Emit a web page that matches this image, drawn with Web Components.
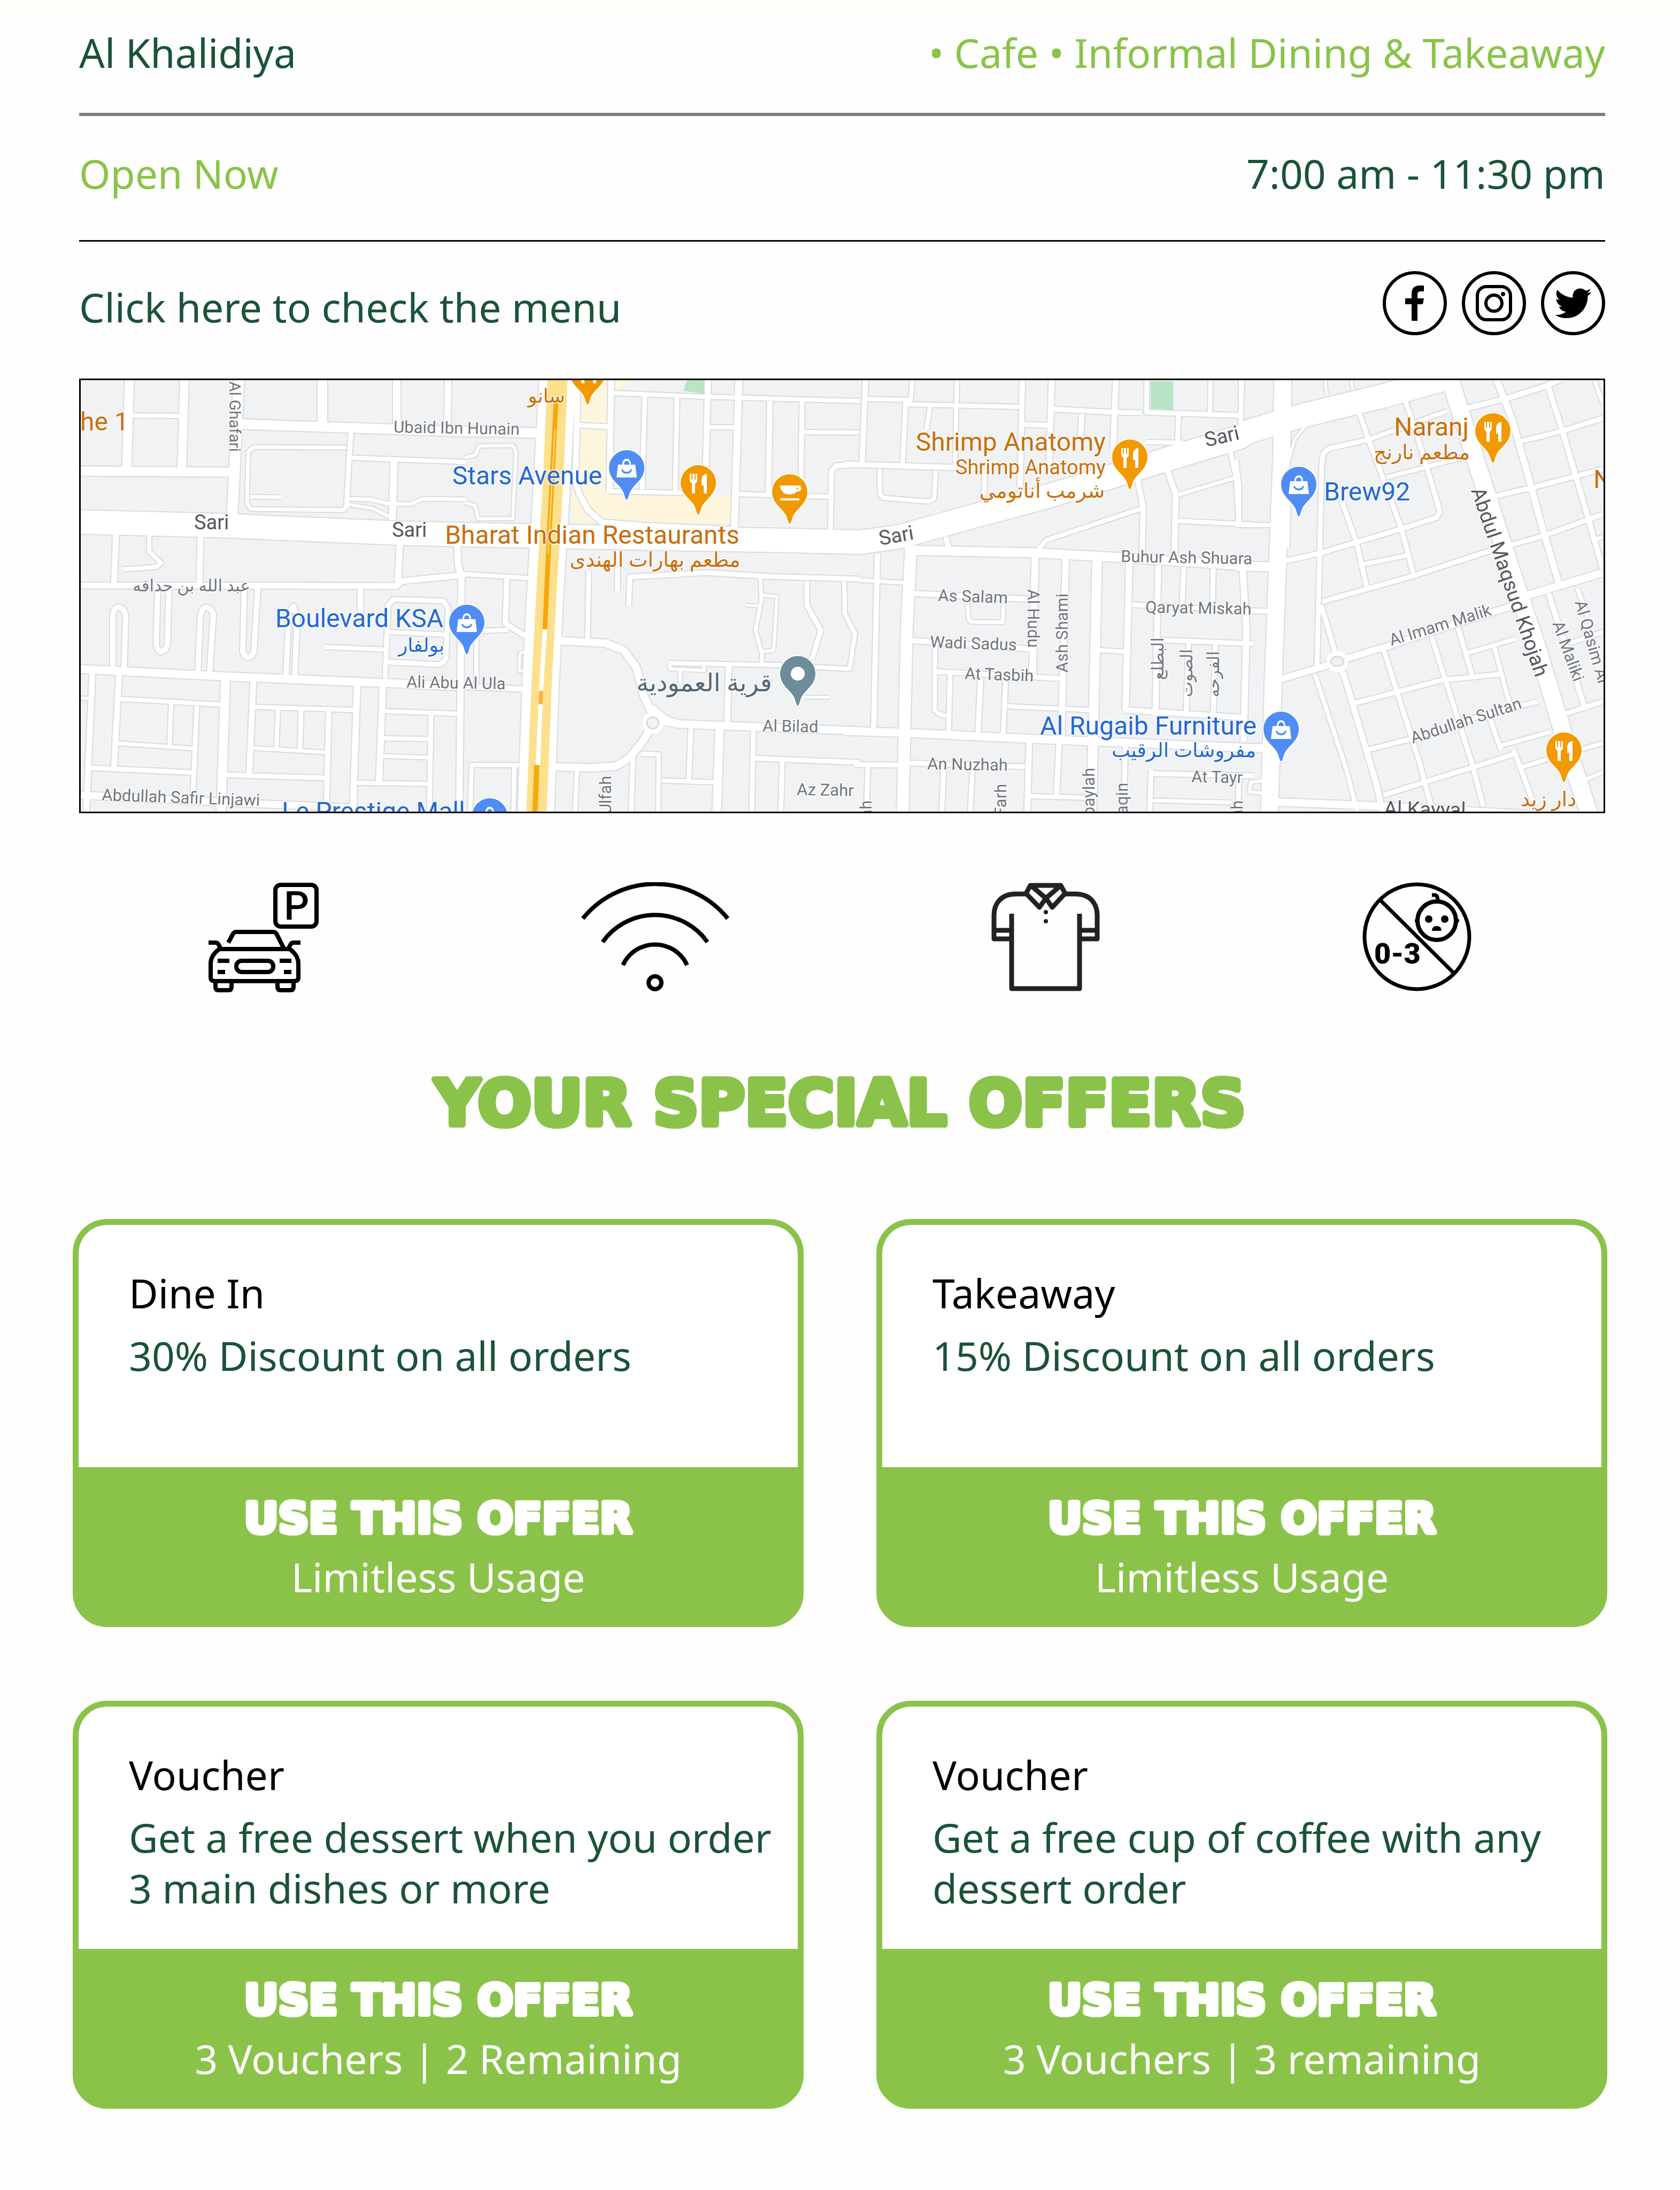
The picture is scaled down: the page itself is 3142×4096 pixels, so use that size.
<!DOCTYPE html>
<html lang="en">
<head>
<meta charset="utf-8">
<meta name="viewport" content="width=device-width, initial-scale=1">
<title>Special offers</title>
<style>
  body {
    margin: 0;
    font-family: "Noto Sans", "Open Sans", sans-serif;
    font-size: 75px;
    line-height: 96px;
    color: #000;
    background: linear-gradient(#fffef8, #fefefe 40px);
    --green: #8bc34a;
    --forest: #1b5338;
  }
</style>
</head>
<body>
<venue-page></venue-page>

<script>
const define = (name, html, setup) => {
  const template = document.createElement('template');
  template.innerHTML = html;
  customElements.define(name, class extends HTMLElement {
    constructor() {
      super();
      this.attachShadow({ mode: 'open' }).append(template.content.cloneNode(true));
      if (setup) setup(this.shadowRoot, this);
    }
  });
};

/* Bold lettering with soft, rounded corners: a ring of shadows round each glyph. */
const ring = () => {
  const out = [];
  for (let i = 0; i < 16; i++) {
    const a = i * Math.PI / 8;
    out.push(`calc(var(--r) * ${Math.cos(a).toFixed(2)}) calc(var(--r) * ${Math.sin(a).toFixed(2)}) 0 currentColor`);
  }
  return out.join(',');
};

define('info-row', `
  <style>
    :host { display: flex; justify-content: space-between; border-bottom: 3px solid #000; padding: 59px 0 77px; color: var(--forest); }
    :host([first]) { border-bottom: 6px solid #808080; padding: 50px 0 65px; }
    ::slotted(.live) { color: var(--green); }
  </style>
  <slot></slot>`);

define('social-link', `
  <style>
    :host { display: block; width: 120px; height: 120px; }
    svg { display: block; width: 100%; height: 100%; }
    g { display: none; }
    :host([kind=facebook]) .facebook, :host([kind=instagram]) .instagram, :host([kind=twitter]) .twitter { display: inline; }
  </style>
  <a href="#"><svg viewBox="0 0 120 120" aria-hidden="true">
    <circle cx="60" cy="60" r="57" fill="none" stroke="#000" stroke-width="6"/>
    <g class="facebook"><path d="M54 93V62H42V51h12V42c0-10 6-15 15-15h8v11h-6c-4 0-6 2-6 6v7h12l-2 11h-10v31z"/></g>
    <g class="instagram" fill="none" stroke="#000" stroke-width="6">
      <rect x="29" y="29" width="62" height="62" rx="17"/><circle cx="60" cy="60" r="15"/><circle cx="77" cy="43" r="4" fill="#000" stroke="none"/></g>
    <g class="twitter"><path transform="translate(26 26) scale(2.85)" d="M23.95 4.57a10 10 0 0 1-2.82.78 4.96 4.96 0 0 0 2.16-2.73c-.95.56-2 .96-3.13 1.19a4.92 4.92 0 0 0-8.38 4.48C7.69 8.1 4.07 6.13 1.64 3.16a4.92 4.92 0 0 0 1.52 6.57 4.9 4.9 0 0 1-2.23-.61v.06a4.92 4.92 0 0 0 3.95 4.83 5 5 0 0 1-2.21.08 4.94 4.94 0 0 0 4.6 3.42A9.87 9.87 0 0 1 0 19.54a13.99 13.99 0 0 0 7.56 2.21c9.05 0 14-7.5 14-13.98 0-.21 0-.42-.02-.63a9.94 9.94 0 0 0 2.46-2.55z"/></g>
  </svg></a>`, (root, host) => {
    root.querySelector('a').setAttribute('aria-label', host.getAttribute('kind') || 'social');
  });

define('menu-bar', `
  <style>
    :host { display: flex; justify-content: space-between; align-items: flex-start; padding: 55px 0 67px; }
    ::slotted(a) { color: var(--forest); text-decoration: none; padding: 19px 0; }
    nav { display: flex; gap: 28px; }
  </style>
  <slot></slot>
  <nav aria-label="Social">
    <social-link kind="facebook"></social-link>
    <social-link kind="instagram"></social-link>
    <social-link kind="twitter"></social-link>
  </nav>`);

/* ---- Map ---- */
/* Survey sheets, left to right; each has its own origin on the map. */
const SHEET_X = [-18, 719, 1456, 2160];
const at = (s, x, y) => [Math.round(SHEET_X[s] + x * 0.4702), Math.round(y * 0.53 - 14)];

/* One road per entry: width, then points. */
const ROADS = [
`17 30,347 640,350|17 232,20 222,345|8 228,150 440,152|16 450,20 440,345|20 668,20 640,520|18 665,182 1283,200 1568,207|18 1000,20 1000,185|14 1295,20 1295,195|12 1500,20 1498,200
9 1115,205 1105,300 1095,480|8 1110,300 1568,315|7 1095,265 725,262 705,280 700,460 715,482 1085,485 1095,470|7 710,438 835,440|13 1285,310 1278,520|7 1100,445 1190,448 1260,462 1350,465 1400,445 1568,448|6 1100,465 1200,480 1270,510
11 178,560 170,750|8 310,570 310,630 358,672 340,685 208,695|11 515,575 510,750|12 1308,600 1300,740|11 30,750 1295,752 1312,735 1568,714|12 1535,600 1540,680 1552,720 1545,1568
10 165,1050 165,850 175,832 190,826 207,834 216,855 210,1050|10 345,755 338,960 345,978 358,985 374,978 382,960 390,755|10 505,1060 515,850 525,832 540,826 556,834 565,850 550,1060|10 690,760 682,985 692,1000 705,1005 720,998 728,980 742,760|10 855,1070 865,845 885,825 900,860 888,1070
10 1150,755 1150,850|9 1248,1085 1262,820 1280,800 1480,805 1500,830 1490,1010 1470,1030 1250,1020|8 1255,915 1490,925|8 1010,968 1250,978
15 30,1045 560,1070 1230,1095 1568,1107|11 85,1050 60,1568|11 192,1050 170,1400|17 615,1070 595,1568|11 725,1085 708,1420|12 1137,1095 1120,1568|12 1240,1100 1225,1445
8 190,1150 600,1172|8 730,1180 1125,1190|8 1240,1195 1545,1203|7 180,1307 490,1327|7 720,1325 1010,1340|9 70,1395 490,1412|9 600,1418 1010,1430|8 1130,1447 1430,1450|8 1240,1290 1430,1293|7 1240,1353 1430,1358|6 30,1148 80,1150
8 397,1165 392,1315|9 500,1175 485,1490|8 822,1185 816,1325|9 915,1190 910,1335|10 1025,1190 1015,1568|9 1432,1205 1425,1568|13 30,1490 780,1522 1130,1535`,
`18 0,207 150,210 300,213|11 447,20 445,180 438,380 455,430 490,485 545,528 700,540 1080,555|9 440,185 575,190|11 580,20 575,420|8 585,72 960,85 1568,100|9 714,80 705,420|9 842,85 835,425|11 965,20 955,430|8 570,418 880,425|13 1088,20 1070,570|8 960,192 1085,192|10 1212,100 1205,435|9 1340,100 1335,380|8 1085,428 1450,438|8 1340,210 1568,212|9 1568,325 1475,328 1457,345 1452,580
6 0,300 40,290 55,258 190,256 203,280 190,515 50,515 40,470 0,458|8 0,712 250,725|9 650,820 655,720 850,712 960,705 1200,718 1568,728|9 607,690 607,770|9 492,700 488,940|10 165,728 160,885 240,930|8 70,912 170,908
14 370,945 560,955 630,980 680,1040 710,1140 747,1210|14 760,1225 850,1240 1568,1265|14 740,1250 700,1310 650,1360 600,1388 500,1395 340,1390|9 745,1180 800,1220 850,1235
8 808,1025 1250,1032 1530,1045 1550,920 1510,850 1508,735|6 815,1025 815,1045 950,1050 950,1030|6 855,1050 855,1100|11 1048,1030 1042,1240|7 1175,720 1178,800 1155,910 1180,990 1180,1030|6 1180,785 1240,790 1228,980 1180,985|5 1115,820 1170,822|9 1358,735 1360,820 1415,910 1380,1010|5 1350,1145 1450,1145
9 898,1255 890,1445|16 1012,1240 1000,1568|9 1147,1260 1140,1568|8 780,1440 1000,1445|8 700,1345 770,1347 768,1568|9 667,1350 660,1568|8 445,1400 435,1568|9 1140,1360 1568,1375|9 1262,1370 1255,1568|8 20,1568 25,1385 215,1385|8 195,1385 192,1568|5 235,985 217,990 215,1050 235,1052|8 45,930 45,1100|10 0,1107 240,1117`,
`10 25,20 10,330|10 -60,322 480,337|8 25,92 205,97 212,20|9 185,95 172,325|8 185,112 640,120|8 390,20 380,330|8 280,120 268,200|10 648,20 640,400|11 765,20 755,330|9 640,183 755,185|9 765,128 1010,140 1120,142|10 885,145 880,240|11 1020,20 1010,270|9 1145,20 1143,140 1510,150|9 1270,150 1265,260|8 1145,245 1290,248|8 1398,25 1395,150|8 1518,20 1518,210|8 80,340 83,430 95,442 275,455 297,445 305,345|9 498,340 498,430
10 345,580 360,635|17 180,627 700,635 1050,652 1568,683|8 700,635 745,590 1130,478|10 1105,370 1130,475 1126,650|11 1220,330 1260,430 1252,660|7 1270,430 1500,370|9 1470,250 1500,370 1510,530|8 1260,522 1568,535
22 207,610 190,900 172,1568|10 72,640 58,1260|7 0,733 180,742|10 210,780 690,800|7 430,810 435,870 445,880 570,882 575,820|10 210,945 690,975|8 302,960 300,1190 320,1205 350,1212|9 305,1055 800,1080|9 362,1065 355,1275|10 482,1080 473,1280|9 582,1080 573,1285|13 700,650 690,1080|12 820,655 803,1290|18 947,655 922,1568|12 1075,670 1060,1190|8 590,1178 920,1190|8 955,980 1070,985|11 1188,680 1178,1210|9 1290,685 1285,815|9 1408,690 1405,820|12 1525,690 1540,900 1530,1300|9 1085,818 1568,842|9 1200,943 1568,957|9 1310,955 1300,1210|9 1417,960 1408,1210|10 1060,1190 1530,1217
15 -60,1265 200,1272 640,1290 1568,1325|11 677,1290 668,1568|10 795,1290 785,1495|9 190,1378 660,1390|9 335,1390 328,1568|9 450,1390 440,1568|8 670,1495 900,1500|9 1060,1310 1050,1568|9 1162,1400 1155,1568|9 1170,1415 1568,1422|7 1160,1510 1480,1517|9 -20,1383 180,1385|9 35,1390 28,1568|9 1510,1420 1505,1568`,
`32 187,20 182,300 165,700 148,1100 135,1568|8 25,20 20,180|9 0,310 12,400 12,530|5 285,180 235,235 215,300|5 355,20 362,75|5 460,20 465,60|5 212,460 208,620|9 530,235 370,268 348,285 343,320 323,1050|9 490,135 530,240 590,380 660,550 708,715|9 668,85 710,190 760,330 813,490 800,512 660,550 340,635 200,665|9 425,460 480,600 520,755|8 530,235 840,135|8 600,370 900,300|8 490,680 680,645|9 345,808 700,718 1000,633 1225,575 1460,500
12 1035,20 1100,165 1160,350 1215,530 1290,760|10 1240,40 1300,205 1390,480 1460,690|7 1425,20 1462,110|10 900,130 1080,90 1240,45 1300,20|9 1120,245 1300,205 1462,160|9 1015,440 1180,405 1462,340|14 1130,795 1270,757 1462,705|7 1420,590 1462,580
9 340,820 400,1000|12 180,1082 340,1040 405,1018 620,960 860,890 1110,820|11 405,1018 432,1070 560,1450 590,1568|8 315,1065 440,1400 490,1568|9 590,980 650,1150 730,1370 780,1540|9 778,930 840,1100 940,1380 985,1530|9 885,900 945,1080|8 1030,970 1080,1140 1090,1170|8 925,988 1110,940|9 465,1168 820,1085 1050,1065|9 530,1330 705,1290 900,1230 1200,1160|9 590,1490 770,1440 950,1390 1110,1345|9 1000,1190 1055,1330|9 1105,1330 1180,1510|8 1060,1315 1250,1268|10 1245,780 1310,960 1390,1190|8 1360,760 1400,860|9 1290,1210 1462,1160|8 1130,1395 1240,1365 1370,1330 1462,1308|7 1390,1435 1462,1410|8 1330,955 1462,915
14 160,1515 600,1530 1200,1560|8 0,955 50,957|8 30,690 30,840|8 45,850 30,1300|9 0,840 130,842|17 0,683 150,685|8 0,537 140,537|15 0,1325 130,1325|6 110,1440 60,1445 55,1480 110,1485`
];
const ARTERIES = [
  [44, [[0,20,527],[0,600,540],[0,1300,566],[1,0,572],[1,800,585],[1,1300,592],[2,0,598],[2,160,580],[2,420,515],[2,750,435],[2,1100,340],[2,1510,228],[3,60,205],[3,250,155],[3,600,80],[3,860,15]]],
  [32, [[3,845,0],[3,960,320],[3,1110,735],[3,1200,970],[3,1340,1380],[3,1410,1568]]],
  [68, [[1,368,10],[1,345,400],[1,322,740],[1,300,1100],[1,280,1568]]]
];
const LABELS = [
  /* sheet, x, y, text, colour, size, anchor, turn */
  [0,36,203,'he 1','food',48,'start'],
  [0,630,280,'Al Ghafari','road',30,'end',90],
  [0,490,553,'Sari','main',38,'start',0],[0,1275,580,'Sari','main',38,'start',0],
  [0,478,772,'عبد الله بن حدافه','road',31,'middle'],
  [0,1283,212,'Ubaid Ibn Hunain','road',31,'start',1],
  [1,545,395,'Stars Avenue','shop',48,'end'],
  [0,1480,898,'Boulevard KSA','shop',48,'end'],[0,1394,985,'بولفار','shop',36,'middle'],
  [0,1333,1112,'Ali Abu Al Ula','road',31,'start',1],
  [0,122,1510,'Abdullah Safir Linjawi','road',31,'start',2],
  [0,838,1580,'Le Prestige Mall','shop',48,'start'],
  [1,323,105,'سانو','food',36,'middle'],
  [1,1092,603,'Bharat Indian Restaurants','food',48,'end'],
  [1,754,685,'مطعم بهارات الهندى','food',38,'middle'],
  [1,951,1125,'قرية العمودية','place',46,'middle'],
  [1,1182,1266,'Al Bilad','road',31,'start',1],[1,1318,1490,'Az Zahr','road',31,'start',1],
  [1,580,1423,'Ulfah','road',31,'end',-90],
  [2,980,275,'Shrimp Anatomy','food',48,'end'],[2,980,358,'Shrimp Anatomy','food',38,'end'],
  [2,728,442,'شرمب أناتومي','food',38,'middle'],
  [2,84,610,'Sari','main',38,'start',-10],[2,1380,262,'Sari','main',38,'start',-13],
  [2,1040,668,'Buhur Ash Shuara','road',31,'start',1],
  [2,1138,847,'Qaryat Miskah','road',31,'start',1],
  [2,313,805,'As Salam','road',31,'start',2],[2,280,970,'Wadi Sadus','road',31,'start',2],
  [2,418,1082,'At Tasbih','road',31,'start',2],[2,270,1400,'An Nuzhah','road',31,'start',1],
  [2,1320,1445,'At Tayr','road',31,'start',1],
  [2,670,765,'Al Hudu','road',31,'start',90],[2,830,1058,'Ash Shami','road',31,'start',-90],
  [2,585,1450,'Farh','road',31,'end',-90],[2,935,1395,'baylah','road',31,'end',-90],[2,1068,1448,'aqin','road',31,'end',-90],
  [2,48,1510,'ah','road',31,'end',-90],[2,1525,1510,'ah','road',31,'end',-90],
  [2,1210,1010,'البطلع','road',31,'middle',-90],[2,1324,1060,'الصوت','road',31,'middle',-90],[2,1432,1064,'الفرحه','road',31,'middle',-90],
  [3,83,1277,'Al Rugaib Furniture','shop',48,'end'],
  [2,1290,1357,'مفروشات الرقيب','shop',37,'middle'],
  [3,350,450,'Brew92','shop',48,'start'],
  [3,928,223,'Naranj','food',48,'end'],[3,741,305,'مطعم نارنج','food',38,'middle'],
  [3,1422,408,'N','food',48,'start'],
  [3,935,415,'Abdul Maqsud Khojah','main',38,'start',71],
  [3,618,965,'Al Imam Malik','road',31,'start',-17],[3,703,1310,'Abdullah Sultan','road',31,'start',-18],
  [3,1348,810,'Al Qasim Al','road',31,'start',74],[3,1258,885,'Al Maliki','road',31,'start',70],
  [3,590,1562,'Al Kayyal','main',38,'start',1],
  [3,1244,1530,'دار زيد','food',38,'middle']
];
const PINS = [
  [1,488,0,'fork'],[1,643,336,'bag'],[1,927,388,'fork'],[1,1292,421,'cup'],[1,6,881,'bag'],[1,98,1565,'bag'],[1,1322,1063,'dot'],
  [2,1076,298,'fork'],[3,1022,206,'fork'],[3,250,395,'bag'],[3,180,1258,'bag'],[3,1305,1333,'fork']
];
const GLYPH = {
  fork: '<path d="M-16-17v11c0 4 2 6 4 7v19h6V1c3-1 4-3 4-7v-11h-3v11h-2v-11h-4v11h-2v-11zM16-17c-7 1-10 6-10 13v9h4v15h6z"/>',
  bag: '<path fill-rule="evenodd" d="M-16-6h8c0-7 3-11 8-11s8 4 8 11h8l3 24h-38zM-5-6H5c0-5-2-7-5-7s-5 2-5 7zM-10 3c1 11 19 11 20 0H7c-1 6-13 6-14 0z"/>',
  cup: '<path fill-rule="evenodd" d="M-18-12h38c5 10-3 12-7 11-3 7-22 8-26 1-4-4-5-8-5-12zM13-8v4c3 0 3-2 2-4zM-18 12h36v4h-36z"/>',
  dot: '<circle r="13"/>'
};
const PIN_FILL = { fork: '#f29900', bag: '#4f8df5', cup: '#f29900', dot: '#6c8d99' };

define('area-map', `
  <style>
    :host { display: block; border: 3px solid #000; background: #f0f2f4; }
    svg { display: block; width: 100%; height: auto; overflow: hidden; }
    text { font-family: Roboto, "DejaVu Sans", sans-serif; paint-order: stroke; stroke: #fff; stroke-width: 4px; stroke-linejoin: round; stroke-opacity: .75; }
    polyline { fill: none; stroke-linejoin: round; }
    .food { fill: #c8700c; } .shop { fill: #2569cf; } .road { fill: #72767b; } .main { fill: #56595e; } .place { fill: #546871; }
  </style>
  <svg viewBox="0 0 2848 807" role="img" aria-label="Map of the area"></svg>`, root => {
    const pts = list => list.map(p => at(...p).join(',')).join(' ');
    const roads = ARTERIES.map(([w, list]) => [w, pts(list)]);
    ROADS.forEach((text, s) => text.split(/[|\n]/).forEach(line => {
      const [w, ...rest] = line.trim().split(' ');
      roads.push([+w, rest.map(p => at(s, ...p.split(',').map(Number)).join(',')).join(' ')]);
    }));
    const poly = (s, fill, ...p) => `<polygon fill="${fill}" points="${pts(p.map(q => [s, ...q]))}"/>`;
    const line = (w, stroke, list) => `<polyline stroke="${stroke}" stroke-width="${w}" points="${pts(list)}"/>`;
    let s = poly(1,'#fef6dc',[450,20],[575,20],[568,428],[1065,432],[1058,530],[425,530],[425,410],[450,400]) +
      poly(1,'#fef6dc',[590,20],[690,20],[600,66]) +
      poly(1,'#b9e4c6',[885,20],[960,20],[960,75],[868,65]) + poly(2,'#b9e4c6',[1160,30],[1248,30],[1248,132],[1160,128]);
    roads.forEach(([w, p]) => s += `<polyline stroke="#d9dbdf" stroke-width="${w + 4}" points="${p}"/>`);
    roads.forEach(([w, p]) => s += `<polyline stroke="#fff" stroke-width="${w}" points="${p}"/>`);
    const [cx, cy] = at(1, 747, 1235), [dx, dy] = at(3, 405, 1018);
    s += `<g fill="#f0f2f4" stroke="#d9dbdf" stroke-width="3"><circle cx="${cx}" cy="${cy}" r="20" fill="#fff" stroke="none"/><circle cx="${cx}" cy="${cy}" r="11"/><circle cx="${dx}" cy="${dy}" r="20" fill="#fff" stroke="none"/><ellipse cx="${dx}" cy="${dy}" rx="12" ry="9"/></g>`;
    s += line(38,'#fde08d',[[1,367,10],[1,348,400],[1,325,740],[1,305,1100],[1,283,1568]]);
    s += line(8,'#fff',[[1,317,905],[1,303,1120]]) + line(8,'#fff',[[1,300,1170],[1,290,1385]]);
    s += line(9,'#f5a90f',[[1,362,100],[1,336,540],[1,316,905]]) + line(7,'#f5b433',[[1,302,1125],[1,299,1170]]) + line(10,'#f5a90f',[[1,286,1385],[1,276,1568]]);
    s += line(2,'#fde08d',[[1,358,200],[1,330,640]]);
    PINS.forEach(([t, x, y, kind]) => {
      s += `<g transform="translate(${at(t, x, y)})"><path fill="${PIN_FILL[kind]}" stroke="#fff" stroke-width="2" d="M0 61C-4 61-4 52-8 44-14 32-34 22-34 0a34 34 0 0 1 68 0C34 22 14 32 8 44 4 52 4 61 0 61z"/><g fill="#fff">${GLYPH[kind]}</g></g>`;
    });
    LABELS.forEach(([t, x, y, text, kind, size, anchor, turn]) => {
      s += `<text class="${kind}" font-size="${size}" text-anchor="${anchor}" transform="translate(${at(t, x, y)}) rotate(${turn || 0})">${text}</text>`;
    });
    root.querySelector('svg').innerHTML = s;
  });

define('facility-icons', `
  <style>
    :host { display: flex; justify-content: space-between; align-items: flex-start; padding: 129px 250px 0 242px; }
    svg { display: block; height: 208px; }
    text { font-family: Roboto, sans-serif; }
  </style>
  <svg width="207" viewBox="0 0 207 208" fill="none" stroke="#000" stroke-width="8" role="img" aria-label="Parking">
    <rect x="125" y="5" width="77" height="78" rx="10"/>
    <text x="141" y="70" font-size="74" font-weight="500" fill="#000" stroke="none">P</text>
    <path d="M37 113l8-15q2-5 7-5h69q5 0 7 5l13 26M0 113h13q4 0 6 4l4 8M172 113h-13q-4 0-6 4l-4 8"/>
    <path d="M20 125h132q16 12 16 27v26q0 7-8 7H12q-8 0-8-7v-26q0-15 16-27z"/>
    <path d="M17 147h22M133 147h22M17 168h14M141 168h14"/>
    <rect x="52" y="147" width="69" height="21" rx="10"/>
    <path d="M13 186v10q0 6 6 6h18q6 0 6-6v-10M129 186v10q0 6 6 6h18q6 0 6-6v-10"/>
  </svg>
  <svg width="277" viewBox="0 0 277 208" fill="none" stroke="#000" stroke-width="8" role="img" aria-label="Wi-Fi">
    <path d="M3 68A174 174 0 0 1 274 68M40 112A120 120 0 0 1 236 112M78 155A66 66 0 0 1 198 155"/>
    <circle cx="138" cy="188" r="12"/>
  </svg>
  <svg width="204" viewBox="0 0 204 208" fill="none" stroke="#222" stroke-width="9" stroke-linejoin="round" role="img" aria-label="Smart casual dress">
    <path d="M65 22H46C18 22 5 40 5 62v44h33M138 22h19c28 0 41 18 41 40v44h-33M5 90h33M198 90h-33M38 59v140h127V59"/>
    <path d="M65 21l8-15h57l8 15-24 26-12-17-12 17zM74 6l28 24 28-24"/>
    <circle cx="102" cy="56" r="4" fill="#222" stroke="none"/><circle cx="102" cy="73" r="4" fill="#222" stroke="none"/>
  </svg>
  <svg width="204" viewBox="0 0 204 208" fill="none" stroke="#000" stroke-width="7" role="img" aria-label="No children aged 0-3">
    <circle cx="102" cy="102" r="98"/><path d="M33 33l137 136"/>
    <circle cx="139" cy="72" r="36" fill="#fefefe" stroke-width="8"/>
    <path d="M130 24h5q6 0 6 11"/>
    <g fill="#000" stroke="none"><circle cx="102" cy="72" r="4"/><circle cx="177" cy="72" r="4"/><circle cx="124" cy="69" r="7"/><circle cx="154" cy="69" r="7"/><path d="M130 91q0-9 9-9t9 9z"/>
    <text x="22" y="152" font-size="54" font-weight="900">0-3</text></g>
  </svg>`);

define('round-title', `
  <style>
    :host { display: block; --r: 5px; }
    h1 { margin: 0; padding: 130px 0 141px; text-align: center; color: var(--green); font: 700 118px/151px "DejaVu Sans", sans-serif; text-shadow: ${ring()}; }
  </style>
  <h1><slot></slot></h1>`);

define('offer-card', `
  <style>
    :host { display: flex; flex-direction: column; border: 11px solid var(--green); border-radius: 64px; background: var(--green); overflow: hidden; }
    .body { flex: 1; min-height: 453px; box-sizing: border-box; padding: 80px 20px 40px 94px; background: #fff; border-radius: 53px 53px 0 0; }
    h2 { margin: 0 0 22px; font: inherit; line-height: 95px; }
    p { margin: 0; line-height: 95px; color: var(--forest); }
    button { display: block; width: 100%; margin: 0; padding: 46px 0 35px; border: 0; background: var(--green); color: #fff; font: inherit; cursor: pointer; }
    b { --r: 4px; display: block; margin-bottom: 11px; font: 700 79px/100px "DejaVu Sans", sans-serif; text-shadow: ${ring()}; }
    span { display: block; }
  </style>
  <div class="body"><h2><slot name="kind"></slot></h2><p><slot></slot></p></div>
  <button type="button"><b>USE THIS OFFER</b><span><slot name="usage"></slot></span></button>`);

define('offer-grid', `
  <style>
    :host { display: grid; grid-template-columns: 1fr 1fr; gap: 138px 136px; padding: 0 136px 152px; }
  </style>
  <slot></slot>`);

define('venue-page', `
  <style>
    :host { display: block; }
    header { padding: 0 140px 0 148px; }
  </style>
  <header>
    <info-row first><span>Al Khalidiya</span><span class="live">• Cafe • Informal Dining &amp; Takeaway</span></info-row>
    <info-row><span class="live">Open Now</span><span>7:00 am - 11:30 pm</span></info-row>
    <menu-bar><a href="#">Click here to check the menu</a></menu-bar>
    <area-map></area-map>
    <facility-icons></facility-icons>
  </header>
  <main>
    <round-title>YOUR SPECIAL OFFERS</round-title>
    <offer-grid>
      <offer-card><span slot="kind">Dine In</span>30% Discount on all orders<span slot="usage">Limitless Usage</span></offer-card>
      <offer-card><span slot="kind">Takeaway</span>15% Discount on all orders<span slot="usage">Limitless Usage</span></offer-card>
      <offer-card><span slot="kind">Voucher</span>Get a free dessert when you order 3 main dishes or more<span slot="usage">3 Vouchers | 2 Remaining</span></offer-card>
      <offer-card><span slot="kind">Voucher</span>Get a free cup of coffee with any dessert order<span slot="usage">3 Vouchers | 3 remaining</span></offer-card>
    </offer-grid>
  </main>`);
</script>
</body>
</html>
